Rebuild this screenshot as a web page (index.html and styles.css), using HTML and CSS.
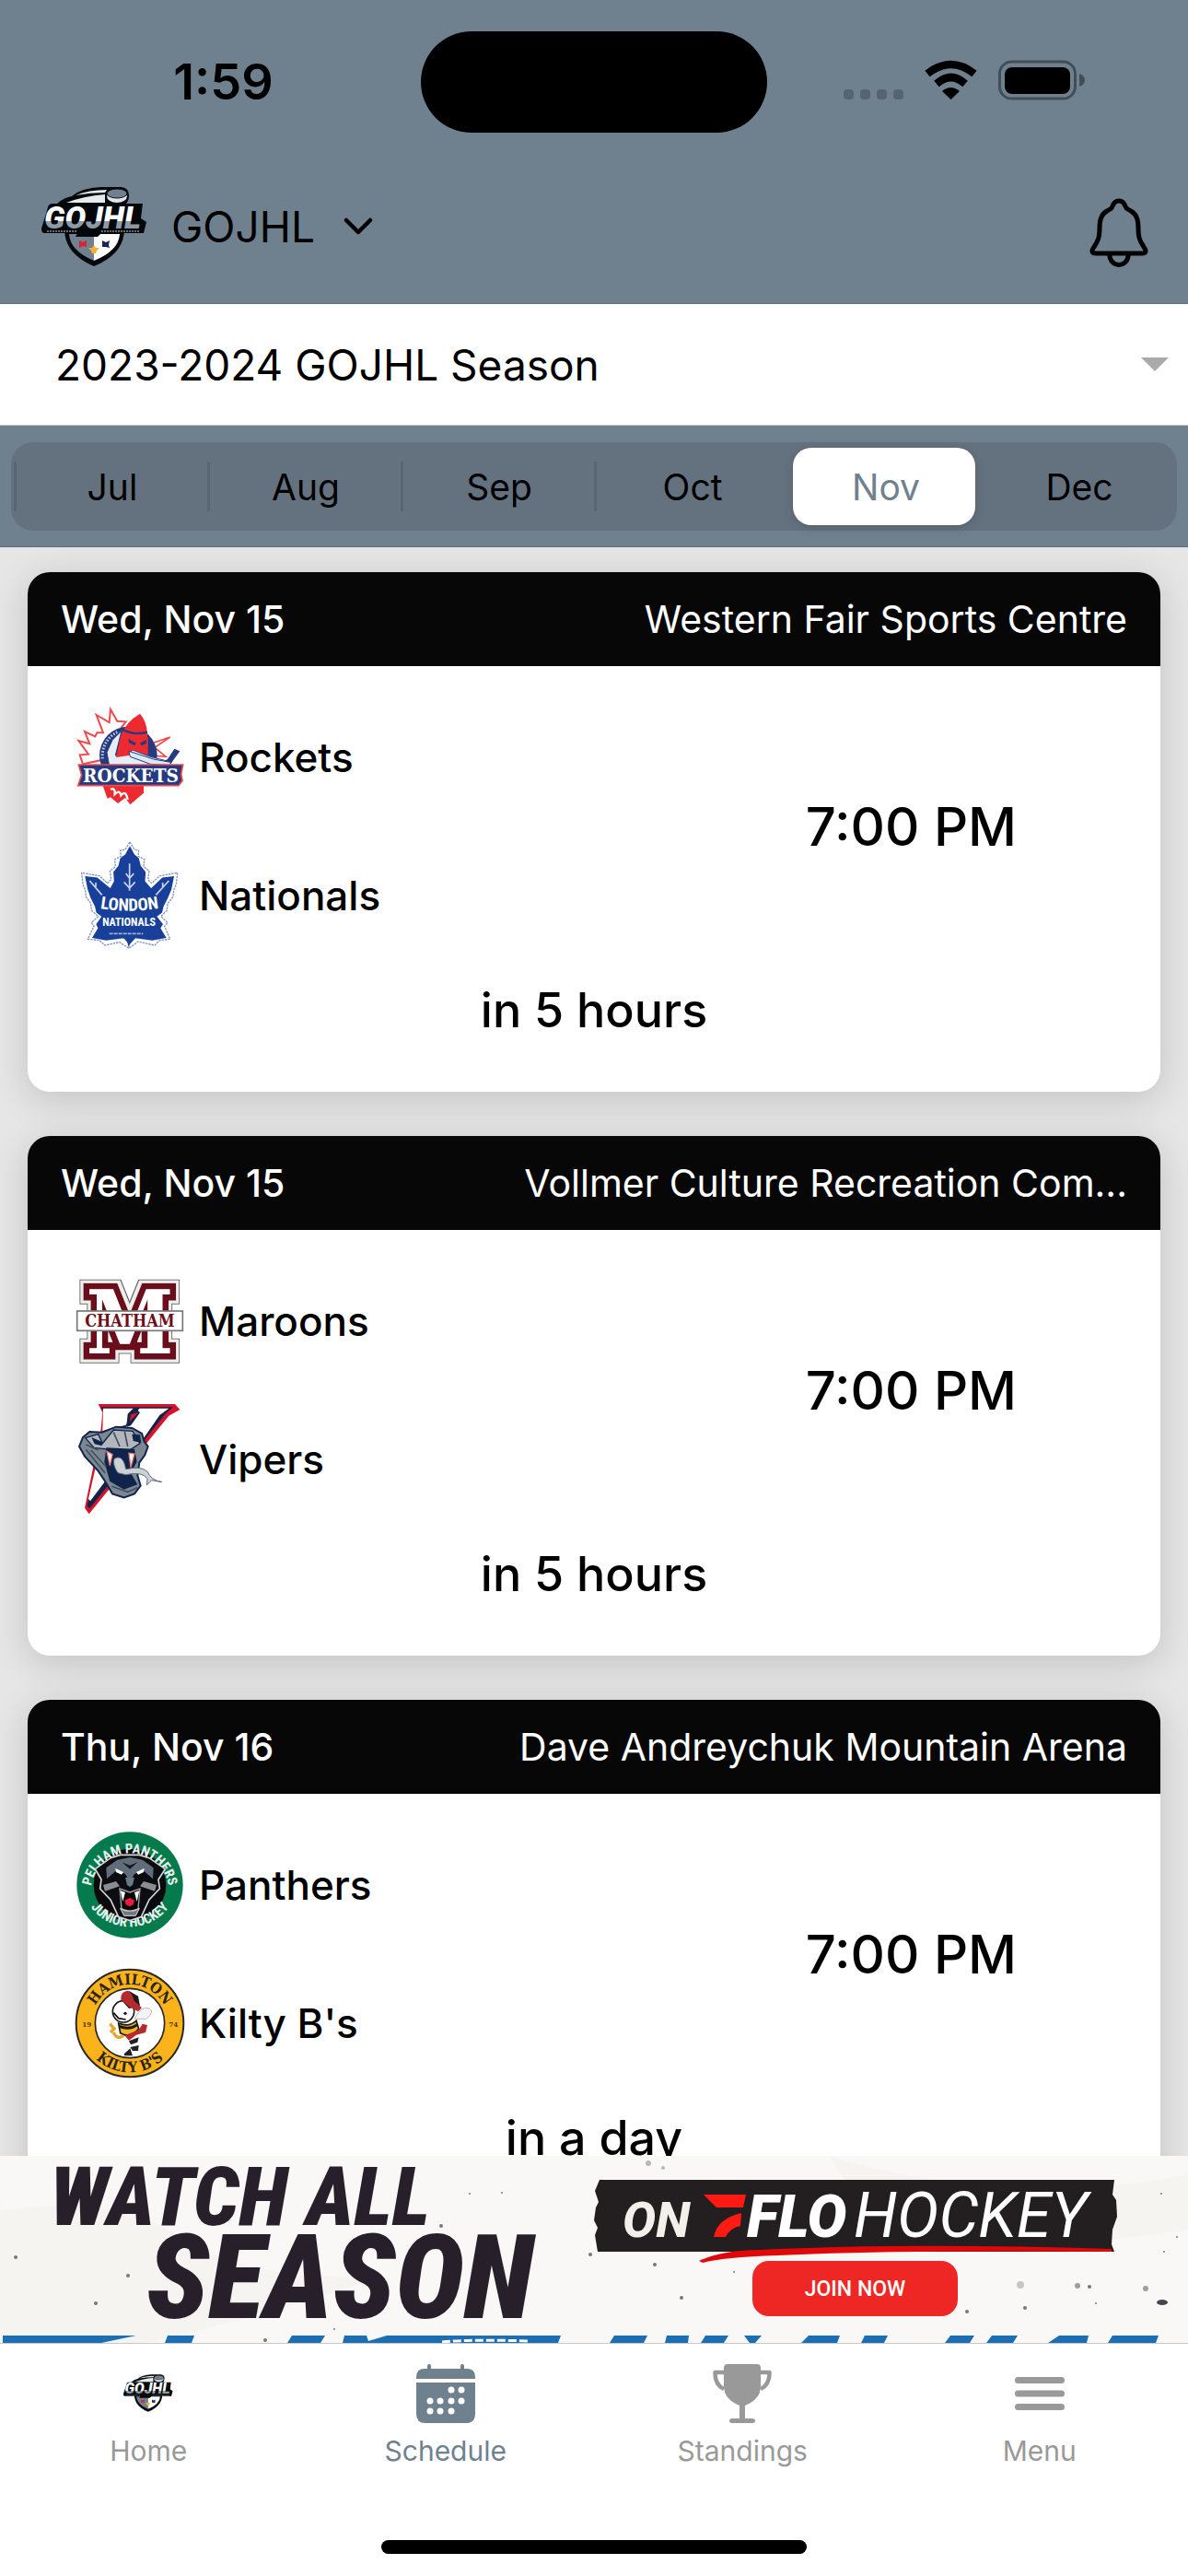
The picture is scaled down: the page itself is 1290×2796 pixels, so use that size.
FILE: index.html
```html
<!DOCTYPE html>
<html lang="en">

<head>
  <meta charset="UTF-8">
  <meta name="viewport" content="width=device-width, initial-scale=1.0">

  <title>GOJHL Schedule</title>
  <link rel="stylesheet" href="styles.css">
</head>

<body>
  <!-- League logo, used in the header and the tab bar -->
  <svg class="defs" aria-hidden="true">
    <defs>
      <linearGradient id="chrome" x1="0" y1="0" x2="0" y2="1">
        <stop offset="0.6" stop-color="#fff" />
        <stop offset="0.6" stop-color="#8c9aa8" />
      </linearGradient>
      <filter id="double-outline" x="-20%" y="-20%" width="140%" height="140%">
        <feMorphology in="SourceAlpha" operator="dilate" radius="13" result="wide" />
        <feFlood flood-color="#666" />
        <feComposite in2="wide" operator="in" result="gray" />
        <feMorphology in="SourceAlpha" operator="dilate" radius="8" result="thin" />
        <feFlood flood-color="#eee" />
        <feComposite in2="thin" operator="in" result="white" />
        <feMerge>
          <feMergeNode in="gray" />
          <feMergeNode in="white" />
          <feMergeNode in="SourceGraphic" />
        </feMerge>
      </filter>
      <symbol id="league-logo" viewBox="45 203 115 86">
        <path d="M62 221Q70 214 78 213Q88 204 110 203H132Q140 204 140 212Q140 218 137 221Z" fill="#05080b" />
        <path d="M72 220Q90 213 114 211V220ZM82 212Q96 206 116 206L114 209Q98 209 82 212Z" fill="#e6eaee" />
        <ellipse cx="127" cy="213" rx="11" ry="7" fill="#dfe4e8" />
        <ellipse cx="127" cy="210" rx="11" ry="5" fill="#708090" stroke="#05080b" stroke-width="1" />
        <path d="M70 250H135Q134 276 102 289Q71 276 70 250Z" fill="#05080b" />
        <path d="M75 254H102V283Q76 272 75 254Z" fill="#708090" />
        <path d="M102 254H130Q129 272 102 283Z" fill="#fff" />
        <path d="M86 261l4 2 4-2v7l-4-1-4 2z" fill="#d8232f" />
        <path d="M102 266l2 3 4 0-3 3-1 3h-4l-1-3-3-3 4 0z" fill="#f9b12b" />
        <path d="M111 261l4 2 4-2-1 5 1 3-4-1-4 0z" fill="#16265c" />
        <path d="M57 221H155L153 237L159 241L156 253H110L106 257H82L84 253H48Q45 253 45 248L52 225Q53 221 57 221Z" fill="#05080b" />
        <text x="48" y="248" class="logo-word" font-size="34" fill="url(#chrome)">GOJHL</text>
        <path d="M51 251H84M110 251H152" stroke="#c9d0d6" stroke-width="1" stroke-dasharray="2 1" />
      </symbol>
    </defs>
  </svg>

  <div class="app">
    <header class="top">
      <div class="status-bar">
        <span class="clock">1:59</span>
        <span class="island"></span>
        <svg class="status-icons" viewBox="0 0 264 44" aria-hidden="true">
          <g fill="#000" opacity="0.22">
            <rect x="0" y="32" width="11" height="11" rx="4" />
            <rect x="18" y="32" width="11" height="11" rx="4" />
            <rect x="36" y="32" width="11" height="11" rx="4" />
            <rect x="54" y="32" width="11" height="11" rx="4" />
          </g>
          <g fill="none" stroke="#000" stroke-width="8.500">
            <path d="M91 15Q116.500 -5 142 15" />
            <path d="M101 26Q116.500 12 132 26" />
          </g>
          <path d="M107 34Q116.500 26 126 34L116.500 43Z" fill="#000" />
          <rect x="169.500" y="2" width="82" height="40" rx="13" fill="none" stroke="#000" stroke-opacity="0.4" stroke-width="3" />
          <rect x="175" y="8" width="71" height="29" rx="8" fill="#000" />
          <path d="M256 15Q262 17 262 22Q262 27 256 29Z" fill="#000" opacity="0.4" />
        </svg>
      </div>
      <div class="league-bar">
        <button class="league-button" type="button">
          <svg class="league-logo" aria-hidden="true"><use href="#league-logo" /></svg>
          <span>GOJHL</span>
          <svg class="chevron" viewBox="0 0 32 20" aria-hidden="true">
            <path d="M3 3L16 16L29 3" fill="none" stroke="#000" stroke-width="4.500" stroke-linecap="round" stroke-linejoin="round" />
          </svg>
        </button>
        <button class="bell-button" type="button" aria-label="Notifications">
          <svg viewBox="0 0 64 76" aria-hidden="true">
            <path d="M32 3C28 3 26 6 25 9C24 12 22 12 19 14C12 18 11 25 11 33C11 43 9 47 5 53C2 57 2 60 7 60H57C62 60 62 57 59 53C55 47 53 43 53 33C53 25 52 18 45 14C42 12 40 12 39 9C38 6 36 3 32 3Z" fill="none" stroke="#000" stroke-width="5" stroke-linejoin="round" />
            <path d="M21.500 60C22 68 26 72.500 32 72.500C38 72.500 42 68 42.500 60" fill="none" stroke="#000" stroke-width="5" />
          </svg>
        </button>
      </div>
    </header>

    <div class="season">
      <select class="season-select" aria-label="Season">
        <option>2023-2024 GOJHL Season</option>
      </select>
      <span class="arrow"></span>
    </div>

    <nav class="months">
      <div class="segments">
        <button type="button" class="month">Jul</button>
        <button type="button" class="month">Aug</button>
        <button type="button" class="month">Sep</button>
        <button type="button" class="month">Oct</button>
        <button type="button" class="month active">Nov</button>
        <button type="button" class="month">Dec</button>
      </div>
    </nav>

    <main class="games">
      <article class="game">
        <header class="game-header">
          <span class="date">Wed, Nov 15</span>
          <span class="venue">Western Fair Sports Centre</span>
        </header>
        <div class="game-body">
          <ul class="teams">
            <li class="team">
              <svg class="team-logo" viewBox="123 66 360 360" aria-hidden="true">
                <path d="M240 90L262 128L290 130L255 175L235 250L150 268L140 238L168 236L136 192L172 202L156 162L190 178L196 166L216 166L194 108L236 132Z" fill="#fff" stroke="#ee4a4e" stroke-width="6" />
                <path d="M362 205L434 180L384 214L420 244L370 240Z" fill="#fff" stroke="#ee4a4e" stroke-width="5" />
                <circle cx="298" cy="240" r="94" fill="#263a80" />
                <path d="M214 250A86 86 0 0 1 262 164" fill="none" stroke="#b9c6e6" stroke-width="9" stroke-dasharray="5 5" />
                <path d="M336 104Q290 130 272 178L262 270H362L360 170Q358 128 336 104Z" fill="#ec2a30" />
                <path d="M280 156Q320 176 360 164" fill="none" stroke="#263a80" stroke-width="7" />
                <path d="M298 186L324 200L318 208L300 198ZM356 188L336 200L340 208L356 202Z" fill="#263a80" />
                <path d="M246 190L276 160L256 240L290 238L312 222L370 244L440 262L420 274H236L228 230Z" fill="#e4eef6" stroke="#263a80" stroke-width="3" />
                <path d="M270 190L258 246L300 240L312 222L362 236V180Z" fill="#ec2a30" />
                <path d="M298 186L324 200L318 208L300 198ZM356 188L336 200L340 208L356 202Z" fill="#263a80" />
                <path d="M410 262L440 262L466 226L448 218L426 252Z" fill="#263a80" />
                <path d="M300 226L380 252L436 262L434 272L370 268L304 244Z" fill="#dbe9f2" stroke="#263a80" stroke-width="3" />
                <path d="M214 336H348V362L304 400L288 378L264 396L240 376L230 380Z" fill="#ec2a30" />
                <path d="M240 350Q256 344 254 366Q270 350 274 370Q290 350 296 384" fill="none" stroke="#fff" stroke-width="7" />
                <path d="M136 270H476L470 300L474 322L462 338H134L146 304Z" fill="#263a80" stroke="#ee4a4e" stroke-width="5" />
                <text x="306" y="328" class="logo-slab" text-anchor="middle" font-size="62" fill="#fff">ROCKETS</text>
              </svg>
              <span>Rockets</span>
            </li>
            <li class="team">
              <svg class="team-logo" viewBox="123 516 360 360" aria-hidden="true">
                <path d="M303 522L318 546L332 550L330 568L350 578L348 602L366 616L362 644L374 656L400 632L458 622L454 660L446 678L444 700L426 722L424 744L404 764L426 784L416 796L434 838L400 842L384 858L330 846L300 868L270 848L222 858L204 842L166 838L186 796L178 784L200 764L178 744L176 722L160 700L158 678L150 660L146 622L204 632L230 656L242 644L238 616L256 602L254 578L274 568L272 550L288 546Z" fill="#fff" stroke="#7d92c8" stroke-width="4" stroke-dasharray="7 3" />
                <path d="M303 540L316 564L330 576L336 600L352 620L350 650L372 676L410 640L444 636L436 676L424 704L410 732L406 750L388 764L408 790L400 802L418 832L376 840L320 832L302 852L284 832L226 840L184 832L202 802L196 790L214 764L196 750L192 732L178 704L168 676L160 636L196 640L240 676L254 650L252 620L268 600L274 576L290 564Z" fill="#183f99" stroke="#183f99" stroke-width="5" />
                <path d="M302 592V680M302 640L290 624M302 640L316 624M302 672L284 652M302 672L320 652M172 648L212 694M430 648L388 694M192 668V654M410 668V654" fill="none" stroke="#c9d5ec" stroke-width="5" />
                <path id="london-curve" d="M196 736Q302 756 408 736" fill="none" />
                <text class="logo-sans" text-anchor="middle" font-size="56" fill="#fff"><textPath href="#london-curve" startOffset="50%">LONDON</textPath></text>
                <text x="300" y="796" class="logo-sans" text-anchor="middle" font-size="36" fill="#fff">NATIONALS</text>
                <path d="M236 820H346" stroke="#9db0da" stroke-width="5" stroke-dasharray="12 3" />
                <path d="M292 840L300 866L306 838Z" fill="#183f99" />
              </svg>
              <span>Nationals</span>
            </li>
          </ul>
          <div class="time">7:00 PM</div>
        </div>
        <p class="countdown">in 5 hours</p>
      </article>

      <article class="game">
        <header class="game-header">
          <span class="date">Wed, Nov 15</span>
          <span class="venue">Vollmer Culture Recreation Com...</span>
        </header>
        <div class="game-body">
          <ul class="teams">
            <li class="team">
              <svg class="team-logo" viewBox="123 102 360 360" aria-hidden="true">
                <text x="303" y="386" class="maroons-m" text-anchor="middle" font-size="286" filter="url(#double-outline)">M</text>
                <rect x="131" y="249" width="344" height="64" fill="#fff" stroke="#777" stroke-width="5" />
                <text x="303" y="299" class="logo-slab" text-anchor="middle" font-size="54" fill="#6c0f1b">CHATHAM</text>
              </svg>
              <span>Maroons</span>
            </li>
            <li class="team">
              <svg class="team-logo" viewBox="123 552 360 360" aria-hidden="true">
                <path d="M200 552H450L466 570L430 590L170 910L156 890L208 640L214 580Z" fill="#d3142c" />
                <path d="M208 562H444L420 582L172 892L164 884L218 640L220 580Z" fill="#10234a" />
                <path d="M216 566H318L290 620L214 640ZM334 566H430L400 588L350 660L270 740L174 868L168 860L200 720L280 640Z" fill="#fff" />
                <path d="M292 626L296 584L318 562L336 580L306 622Z" fill="#10234a" />
                <path d="M302 610L306 586L332 578Z" fill="#d3142c" />
                <path d="M138 690L150 660L172 642L212 644L258 626L310 630L342 648L350 674L362 690L352 718L334 742L328 784L338 818L318 844L284 856L246 844L224 806L200 770L156 722Z" fill="#7c8794" stroke="#10234a" stroke-width="6" />
                <path d="M158 662L200 650L214 680L250 636L312 640L336 680L300 704L240 700L186 694Z" fill="#b2b7bb" stroke="#10234a" stroke-width="4" />
                <path d="M178 660L214 676L212 688L188 682ZM310 650L336 652L340 678L314 672Z" fill="#10234a" />
                <path d="M226 694L318 698L326 740L306 776L328 814L284 830L238 804L220 740Z" fill="#10234a" />
                <path d="M228 706L238 752L246 716ZM300 712L306 758L318 714Z" fill="#fff" stroke="#ec8076" stroke-width="4" />
                <path d="M252 730Q276 716 286 748L290 764Q340 752 360 772Q372 800 408 806L374 800L358 816L360 796Q346 770 290 782L264 776Q246 750 252 730Z" fill="#ccd1d4" stroke="#5f6d7d" stroke-width="3" />
                <path d="M160 700L222 776M176 702L226 756M244 820L296 838L328 824M250 644L270 690M286 642L296 690M160 684L200 702" fill="none" stroke="#424f60" stroke-width="5" />
              </svg>
              <span>Vipers</span>
            </li>
          </ul>
          <div class="time">7:00 PM</div>
        </div>
        <p class="countdown">in 5 hours</p>
      </article>

      <article class="game">
        <header class="game-header">
          <span class="date">Thu, Nov 16</span>
          <span class="venue">Dave Andreychuk Mountain Arena</span>
        </header>
        <div class="game-body">
          <ul class="teams">
            <li class="team">
              <svg class="team-logo" viewBox="123 108 360 360" aria-hidden="true">
                <circle cx="303" cy="288" r="173" fill="#047a4d" />
                <circle cx="303" cy="288" r="118" fill="#0a0a0c" />
                <path id="panthers-top" d="M176 296A128 128 0 0 1 430 296" fill="none" />
                <path id="panthers-bottom" d="M146 284A158 158 0 0 0 460 284" fill="none" />
                <text class="logo-sans" text-anchor="middle" font-size="44" fill="#e8f4ee"><textPath href="#panthers-top" startOffset="50%">PELHAM PANTHERS</textPath></text>
                <text class="logo-sans" text-anchor="middle" font-size="44" fill="#e8f4ee"><textPath href="#panthers-bottom" startOffset="50%">JUNIOR HOCKEY</textPath></text>
                <path d="M190 236L240 200L272 190H334L366 200L418 236L396 270L400 300L366 336L340 392L303 404L266 392L240 336L206 300L210 270Z" fill="#0c0d10" stroke="#d4d6d9" stroke-width="5" />
                <path d="M226 232L262 206L303 198L344 206L380 232L378 268L346 240L318 252L303 280L288 252L260 240L228 268Z" fill="#626d7b" />
                <path d="M278 214L303 224L328 214L303 236Z" fill="#14161a" />
                <path d="M256 234L282 246L276 254L258 246ZM350 234L324 246L330 254L348 246Z" fill="#fff" />
                <path d="M288 264H318L312 288L303 294L294 288Z" fill="#687888" />
                <path d="M216 288L258 276L270 292L222 308ZM390 288L348 276L336 292L384 308Z" fill="#8a8d91" />
                <path d="M270 300L303 312L336 300L330 366L303 374L276 366Z" fill="#060608" stroke="#9da0a4" stroke-width="4" />
                <path d="M272 306L280 342L288 312ZM318 312L326 342L334 306Z" fill="#fff" />
                <path d="M286 338L303 330L318 338L314 352L303 358L290 352Z" fill="#f01a3f" />
                <path d="M272 364L288 372H318L334 364L322 388H284Z" fill="#72777d" stroke="#dcdee0" stroke-width="3" />
              </svg>
              <span>Panthers</span>
            </li>
            <li class="team">
              <svg class="team-logo" viewBox="123 558 360 360" aria-hidden="true">
                <circle cx="303" cy="738" r="175" fill="#fbb31c" stroke="#2a2822" stroke-width="6" />
                <circle cx="303" cy="738" r="113" fill="#fff" stroke="#2a2822" stroke-width="5" />
                <path id="kilty-top" d="M177 738A126 126 0 0 1 429 738" fill="none" />
                <path id="kilty-bottom" d="M143 738A160 160 0 0 0 463 738" fill="none" />
                <text class="logo-slab" text-anchor="middle" font-size="48" fill="#2b2414"><textPath href="#kilty-top" startOffset="50%">HAMILTON</textPath></text>
                <text class="logo-slab" text-anchor="middle" font-size="48" fill="#2b2414"><textPath href="#kilty-bottom" startOffset="50%">KILTY B'S</textPath></text>
                <text x="163" y="750" class="logo-slab" text-anchor="middle" font-size="24" fill="#4a3b14">19</text>
                <text x="445" y="750" class="logo-slab" text-anchor="middle" font-size="24" fill="#4a3b14">74</text>
                <path d="M318 724Q340 680 366 690Q386 700 356 724Z" fill="#f4f4f4" stroke="#bbb" stroke-width="3" />
                <circle cx="282" cy="700" r="35" fill="#fff" stroke="#1a1a1a" stroke-width="5" />
                <path d="M276 664Q276 634 302 634L330 650L336 682L300 690Z" fill="#1a1a1a" />
                <path d="M274 662Q272 634 296 632Q312 640 316 664L342 688L330 700L300 684Z" fill="#b62a2e" />
                <circle cx="288" cy="706" r="5" fill="#111" />
                <path d="M250 704L266 722L290 726" fill="none" stroke="#111" stroke-width="5" />
                <path d="M266 738Q300 752 324 730L332 756Q306 790 272 770Z" fill="#f5b223" stroke="#1a1a1a" stroke-width="5" />
                <path d="M268 748Q302 762 328 742" fill="none" stroke="#1a1a1a" stroke-width="9" />
                <path d="M286 778L332 760L344 740L360 744L354 768L324 776L300 794Z" fill="#b62a2e" />
                <path d="M238 740L252 756L240 768M250 768Q260 794 282 778" fill="none" stroke="#e8a428" stroke-width="10" />
                <path d="M300 796L332 784L328 800L306 808ZM304 816L332 810L330 828L312 828ZM284 838L304 820L312 844H286Z" fill="#222" />
              </svg>
              <span>Kilty B's</span>
            </li>
          </ul>
          <div class="time">7:00 PM</div>
        </div>
        <p class="countdown">in a day</p>
      </article>
    </main>

    <aside class="banner">
      <svg class="banner-art" viewBox="0 0 1290 203" preserveAspectRatio="xMidYMax slice" aria-hidden="true">
        <path d="M0 60Q120 40 200 90T420 130Q300 170 160 203H0ZM900 0Q1100 60 1290 20V80Q1100 110 960 90Z" fill="#f6f4f1" />
        <g fill="#77777c">
          <circle cx="17" cy="110" r="2" /><circle cx="139" cy="130" r="2" /><circle cx="104" cy="160" r="2" />
          <circle cx="510" cy="41" r="1" /><circle cx="545" cy="40" r="1" /><circle cx="479" cy="76" r="2" />
          <circle cx="288" cy="200" r="2" /><circle cx="363" cy="188" r="1" /><circle cx="641" cy="107" r="2" />
          <circle cx="704" cy="8" r="3" opacity="0.5" /><circle cx="720" cy="13" r="2" opacity="0.5" /><circle cx="711" cy="118" r="2" />
          <circle cx="797" cy="126" r="1" /><circle cx="740" cy="154" r="2" /><circle cx="1108" cy="140" r="4" opacity="0.4" />
          <circle cx="1170" cy="141" r="3" opacity="0.7" /><circle cx="1183" cy="142" r="2" /><circle cx="1244" cy="144" r="3" opacity="0.7" />
          <circle cx="1113" cy="165" r="2" /><circle cx="1050" cy="169" r="2" /><circle cx="1190" cy="160" r="1" />
          <circle cx="1278" cy="88" r="1" /><circle cx="1261" cy="41" r="1" /><circle cx="1264" cy="104" r="1" />
        </g>
        <ellipse cx="1262" cy="159" rx="6" ry="3" fill="#44444a" />
        <path d="M3 195H148L110 203H3ZM182 195H211L208 203H179ZM317 195H353L348 203H312ZM374 195H398L400 201L420 195H609L606 203H372ZM667 195H703L699 203H662ZM724 195H748L747 203H722ZM766 195H791L786 203H761ZM808 195H827L820 203H814ZM878 195H912L909 203H870ZM939 195H964L960 203H935ZM1032 195H1058L1053 203H1026ZM1077 195H1105L1100 203H1071ZM1150 195H1182L1180 203H1138ZM1208 195H1258L1255 203H1203Z" fill="#1a6fb5" />
        <path d="M480 202Q510 199 575 201" fill="none" stroke="#f9f8f6" stroke-width="3" stroke-dasharray="9 3" />
      </svg>
      <div class="slogan">
        <span class="slogan-small">WATCH ALL</span>
        <span class="slogan-big">SEASON</span>
      </div>
      <div class="promo">
        <svg class="promo-tape" viewBox="0 0 568 90" role="img" aria-label="On FloHockey">
          <path d="M6 0H565L563 16L567 22L568 40L563 54L562 70L565 78H4L1 60L4 52L0 44L2 30L5 24L1 12Z" fill="#231f20" />
          <path d="M114 88Q140 76 180 76Q340 68 562 75V78Q330 76 200 82Q140 84 118 90Z" fill="#e00808" />
          <path d="M119 16H165L162 30H133ZM160 36L159 50Q148 52 143 62H130Q134 42 160 36Z" fill="#ff1a12" />
          <text x="31" y="62" class="promo-word promo-on" fill="#f2f0eb">ON</text>
          <text x="166" y="62" class="promo-word promo-flo" fill="#fff">FLO</text>
          <text x="282" y="62" class="promo-word promo-hockey" fill="#fff">HOCKEY</text>
        </svg>
        <button class="join-button" type="button">JOIN NOW</button>
      </div>
    </aside>

    <footer class="tab-bar">
      <nav class="tabs">
        <a href="#home" class="tab">
          <svg class="tab-icon" viewBox="0 0 64 64" aria-hidden="true"><use href="#league-logo" x="5" y="11" width="54" height="41" /></svg>
          <span>Home</span>
        </a>
        <a href="#schedule" class="tab active">
          <svg class="tab-icon" viewBox="0 0 64 64" aria-hidden="true">
            <path d="M0 16V14Q0 5 9 5H12V2Q12 0 14 0Q16 0 16 2V5H48V2Q48 0 50 0Q52 0 52 2V5H55Q64 5 64 14V16Z" fill="currentColor" />
            <path d="M0 20H64V54Q64 64 54 64H10Q0 64 0 54Z" fill="currentColor" />
            <g fill="#fff">
              <circle cx="38" cy="28" r="3.500" /><circle cx="49" cy="28" r="3.500" />
              <circle cx="15" cy="40" r="3.500" /><circle cx="26" cy="40" r="3.500" /><circle cx="38" cy="40" r="3.500" /><circle cx="49" cy="40" r="3.500" />
              <circle cx="15" cy="51" r="3.500" /><circle cx="26" cy="51" r="3.500" /><circle cx="38" cy="51" r="3.500" />
            </g>
          </svg>
          <span>Schedule</span>
        </a>
        <a href="#standings" class="tab">
          <svg class="tab-icon" viewBox="0 0 64 64" aria-hidden="true">
            <path d="M16 0H48Q52 0 52 4V24Q52 38 35 45V59H43Q46 59 46 61.500Q46 64 43 64H21Q18 64 18 61.500Q18 59 21 59H29V45Q12 38 12 24V4Q12 0 16 0Z" fill="currentColor" />
            <path d="M12 9H2.500Q2 22 12 27M52 9H61.500Q62 22 52 27" fill="none" stroke="currentColor" stroke-width="4.500" stroke-linejoin="round" />
          </svg>
          <span>Standings</span>
        </a>
        <a href="#menu" class="tab">
          <svg class="tab-icon" viewBox="0 0 64 64" aria-hidden="true">
            <path d="M8.500 17.500H55.500M8.500 32H55.500M8.500 46.500H55.500" stroke="currentColor" stroke-width="7" stroke-linecap="round" />
          </svg>
          <span>Menu</span>
        </a>
      </nav>
      <div class="home-indicator"></div>
    </footer>
  </div>
</body>

</html>
```

FILE: styles.css
```css
* {
  box-sizing: border-box;
}

body {
  font-family: "Inter", "Roboto", sans-serif;
  margin: 0;
  padding: 0;
  color: #000;
  background-color: #fff;
}

button,
select {
  font-family: inherit;
  color: inherit;
  border: none;
  padding: 0;
  background: none;
  cursor: pointer;
}

.defs {
  position: absolute;
  width: 0;
  height: 0;
}

.app {
  display: flex;
  flex-direction: column;
  height: 100vh;
}

/* Status bar and league header */
.top {
  background-color: #6f818f;
  border-bottom: 1px solid #5e6b78;
}

.status-bar {
  display: grid;
  grid-template-columns: 1fr 376px 1fr;
  align-items: center;
  padding-top: 34px;
}

.clock {
  justify-self: center;
  margin-left: 28px;
  font-size: 54px;
  line-height: 60px;
  font-weight: 600;
}

.island {
  height: 110px;
  border-radius: 55px;
  background-color: #000;
}

.status-icons {
  justify-self: center;
  width: 264px;
  height: 44px;
  margin: 0 28px 4px 0;
}

.league-bar {
  display: flex;
  justify-content: space-between;
  align-items: center;
  height: 185px;
  padding: 36px 42px 18px 45px;
}

.league-button {
  display: flex;
  align-items: center;
  gap: 26px;
  font-size: 46px;
  line-height: 60px;
}

.league-logo {
  width: 115px;
  height: 86px;
}

.chevron {
  width: 34px;
  height: 20px;
  margin-left: 4px;
}

.bell-button svg {
  display: block;
  width: 66px;
  height: 76px;
  margin-top: 14px;
}

/* Season drop-down */
.season {
  display: flex;
  align-items: center;
  height: 132px;
  padding-right: 21px;
  border-bottom: 1px solid #c8c8c8;
  background-color: #fff;
}

.season-select {
  flex: 1;
  height: 100%;
  padding-left: 60px;
  font-size: 46px;
  appearance: none;
}

.arrow {
  border: 15px solid transparent;
  border-top-color: #aaa;
  border-bottom: none;
}

/* Month picker */
.months {
  padding: 18px 12px 17px;
  background-color: #6f818f;
  border-bottom: 1px solid #5e6b78;
}

.segments {
  display: grid;
  grid-template-columns: repeat(6, 1fr);
  padding: 6px 3px;
  border-radius: 24px;
  background-color: #64727f;
}

.month {
  height: 84px;
  padding-left: 4px;
  font-size: 39px;
  background: linear-gradient(#586572, #586572) left center / 3px 54px no-repeat;
}

.month.active {
  margin: 0 6px;
  border-radius: 20px;
  color: #6f818f;
  background: #fff;
  box-shadow: 0 3px 12px rgba(0, 0, 0, 0.15);
}

.month.active + .month {
  background: none;
}

/* Game list */
.games {
  flex: 1;
  min-height: 0;
  overflow-y: auto;
  scrollbar-width: none;
  padding: 27px 30px 0;
  background-color: #e6e6e6;
}

.game {
  height: 564px;
  margin-bottom: 48px;
  border-radius: 24px;
  overflow: hidden;
  background-color: #fff;
  box-shadow: 0 8px 40px rgba(0, 0, 0, 0.16);
}

.game-header {
  display: flex;
  justify-content: space-between;
  align-items: center;
  gap: 48px;
  height: 102px;
  padding: 0 36px;
  font-size: 41px;
  color: #fff;
  background-color: #070707;
}

.date {
  font-weight: 500;
  white-space: nowrap;
}

.venue {
  overflow: hidden;
  white-space: nowrap;
  text-overflow: ellipsis;
}

.game-body {
  display: flex;
  align-items: center;
  padding-top: 39px;
}

.teams {
  flex: 1;
  display: flex;
  flex-direction: column;
  gap: 30px;
  margin: 0;
  padding: 0 0 0 51px;
  list-style: none;
}

.team {
  display: flex;
  align-items: center;
  gap: 15px;
  font-size: 44px;
  font-weight: 500;
}

.team-logo {
  width: 120px;
  height: 120px;
}

.time {
  width: 44%;
  font-size: 58px;
  font-weight: 500;
  text-align: center;
}

.countdown {
  margin: 32px 0 0;
  font-size: 52px;
  line-height: 66px;
  font-weight: 500;
  text-align: center;
}

/* Lettering inside the logos */
.logo-word {
  font-family: "Roboto", sans-serif;
  font-weight: 900;
  font-style: italic;
}

.logo-sans {
  font-family: "Liberation Sans Narrow", "Roboto Condensed", "Roboto", sans-serif;
  font-weight: 700;
}

.logo-slab,
.maroons-m {
  font-family: "DejaVu Serif Condensed", "DejaVu Serif", serif;
  font-weight: 700;
}

.maroons-m {
  fill: #fff;
  stroke: #6c0f1b;
  stroke-width: 40px;
  paint-order: stroke;
}

/* Sponsor banner */
.banner {
  position: relative;
  display: grid;
  grid-template-columns: 1fr 1fr;
  height: 203px;
  overflow: hidden;
  background-color: #f9f8f6;
}

.banner-art {
  position: absolute;
  inset: 0;
  width: 100%;
  height: 100%;
}

.slogan {
  position: relative;
  display: flex;
  flex-direction: column;
  padding: 6px 0 0 54px;
  font-family: "Liberation Sans Narrow", "Roboto Condensed", "Roboto", sans-serif;
  font-weight: 900;
  font-style: italic;
  color: #271f2a;
}

.slogan-small {
  font-size: 89px;
  line-height: 78px;
}

.slogan-big {
  padding-left: 105px;
  font-size: 127px;
  line-height: 98px;
}

.promo {
  position: relative;
  display: flex;
  flex-direction: column;
  align-items: flex-start;
  padding-top: 26px;
}

.promo-tape {
  width: 568px;
  height: 90px;
}

.promo-word {
  font-family: "Roboto", sans-serif;
  font-size: 64px;
  font-style: italic;
}

.promo-on {
  font-size: 54px;
  font-weight: 800;
}

.promo-flo {
  font-weight: 900;
}

.promo-hockey {
  font-size: 68px;
  font-weight: 400;
}

.join-button {
  width: 223px;
  height: 60px;
  margin: -2px 0 0 172px;
  border-radius: 18px;
  font-family: "Roboto", sans-serif;
  font-size: 23px;
  font-weight: 500;
  color: #fff;
  background-color: #ee2724;
}

/* Bottom tabs */
.tab-bar {
  display: flex;
  flex-direction: column;
  align-items: center;
  justify-content: space-between;
  height: 253px;
  padding: 22px 0 24px;
  border-top: 1px solid #c8c8c8;
  background-color: #fff;
}

.tabs {
  display: grid;
  grid-template-columns: repeat(4, 1fr);
  width: 100%;
}

.tab {
  display: flex;
  flex-direction: column;
  align-items: center;
  gap: 10px;
  font-size: 30px;
  line-height: 40px;
  color: #999;
  text-decoration: none;
}

.tab.active {
  color: #6f818f;
}

.tab-icon {
  width: 64px;
  height: 64px;
}

.home-indicator {
  width: 462px;
  height: 15px;
  border-radius: 8px;
  background-color: #000;
}
```
